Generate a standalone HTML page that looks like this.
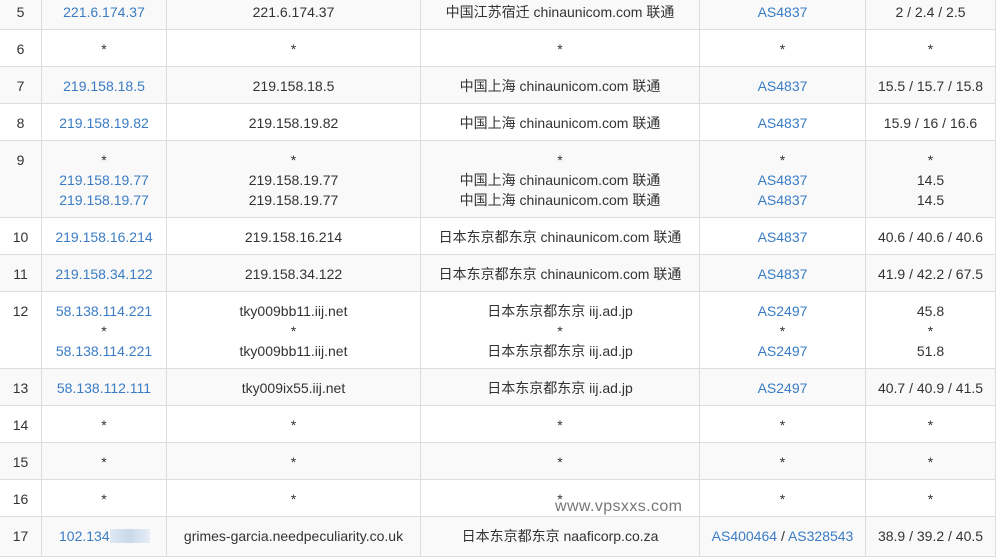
<!DOCTYPE html>
<html><head><meta charset="utf-8"><style>
body{margin:0;width:996px;height:551px;overflow:hidden;background:#fff;font-family:"Liberation Sans","Noto Sans CJK SC",sans-serif;font-size:14px;color:#333;position:relative}
.r{position:absolute;left:0;width:996px;border-bottom:1px solid #ddd;box-sizing:border-box}
.g{background:#f9f9f9}
.c{position:absolute;top:0;bottom:0;border-left:1px solid #ddd;text-align:center;padding-top:9px;line-height:20px;box-sizing:border-box}
.c0{left:0;width:41px;border-left:none}
.c1{left:41px;width:125px}.c2{left:166px;width:254px}.c3{left:420px;width:279px}.c4{left:699px;width:166px}.c5{left:865px;width:131px;border-right:1px solid #ddd}
.b{color:#3a7cc4}
</style></head><body>
<div class="r g" style="top:-7px;height:37px"><div class="c c0">5</div><div class="c c1 b">221.6.174.37</div><div class="c c2">221.6.174.37</div><div class="c c3">中国江苏宿迁 chinaunicom.com 联通</div><div class="c c4 b">AS4837</div><div class="c c5">2 / 2.4 / 2.5</div></div>
<div class="r" style="top:30px;height:37px"><div class="c c0">6</div><div class="c c1">*</div><div class="c c2">*</div><div class="c c3">*</div><div class="c c4">*</div><div class="c c5">*</div></div>
<div class="r g" style="top:67px;height:37px"><div class="c c0">7</div><div class="c c1 b">219.158.18.5</div><div class="c c2">219.158.18.5</div><div class="c c3">中国上海 chinaunicom.com 联通</div><div class="c c4 b">AS4837</div><div class="c c5">15.5 / 15.7 / 15.8</div></div>
<div class="r" style="top:104px;height:37px"><div class="c c0">8</div><div class="c c1 b">219.158.19.82</div><div class="c c2">219.158.19.82</div><div class="c c3">中国上海 chinaunicom.com 联通</div><div class="c c4 b">AS4837</div><div class="c c5">15.9 / 16 / 16.6</div></div>
<div class="r g" style="top:141px;height:77px"><div class="c c0">9</div><div class="c c1 b"><span style="color:#333">*</span><br>219.158.19.77<br>219.158.19.77</div><div class="c c2">*<br>219.158.19.77<br>219.158.19.77</div><div class="c c3">*<br>中国上海 chinaunicom.com 联通<br>中国上海 chinaunicom.com 联通</div><div class="c c4 b"><span style="color:#333">*</span><br>AS4837<br>AS4837</div><div class="c c5">*<br>14.5<br>14.5</div></div>
<div class="r" style="top:218px;height:37px"><div class="c c0">10</div><div class="c c1 b">219.158.16.214</div><div class="c c2">219.158.16.214</div><div class="c c3">日本东京都东京 chinaunicom.com 联通</div><div class="c c4 b">AS4837</div><div class="c c5">40.6 / 40.6 / 40.6</div></div>
<div class="r g" style="top:255px;height:37px"><div class="c c0">11</div><div class="c c1 b">219.158.34.122</div><div class="c c2">219.158.34.122</div><div class="c c3">日本东京都东京 chinaunicom.com 联通</div><div class="c c4 b">AS4837</div><div class="c c5">41.9 / 42.2 / 67.5</div></div>
<div class="r" style="top:292px;height:77px"><div class="c c0">12</div><div class="c c1 b">58.138.114.221<br><span style="color:#333">*</span><br>58.138.114.221</div><div class="c c2">tky009bb11.iij.net<br>*<br>tky009bb11.iij.net</div><div class="c c3">日本东京都东京 iij.ad.jp<br>*<br>日本东京都东京 iij.ad.jp</div><div class="c c4 b">AS2497<br><span style="color:#333">*</span><br>AS2497</div><div class="c c5">45.8<br>*<br>51.8</div></div>
<div class="r g" style="top:369px;height:37px"><div class="c c0">13</div><div class="c c1 b">58.138.112.111</div><div class="c c2">tky009ix55.iij.net</div><div class="c c3">日本东京都东京 iij.ad.jp</div><div class="c c4 b">AS2497</div><div class="c c5">40.7 / 40.9 / 41.5</div></div>
<div class="r" style="top:406px;height:37px"><div class="c c0">14</div><div class="c c1">*</div><div class="c c2">*</div><div class="c c3">*</div><div class="c c4">*</div><div class="c c5">*</div></div>
<div class="r g" style="top:443px;height:37px"><div class="c c0">15</div><div class="c c1">*</div><div class="c c2">*</div><div class="c c3">*</div><div class="c c4">*</div><div class="c c5">*</div></div>
<div class="r" style="top:480px;height:37px"><div class="c c0">16</div><div class="c c1">*</div><div class="c c2">*</div><div class="c c3">*</div><div class="c c4">*</div><div class="c c5">*</div></div>
<div class="r g" style="top:517px;height:40px"><div class="c c0">17</div><div class="c c1 b" style="text-align:left;padding-left:17px">102.134<span style="display:inline-block;width:40px;height:14px;vertical-align:-2px;background:linear-gradient(90deg,#dfe9f3,#c9d9ea,#e6eef6)"></span></div><div class="c c2">grimes-garcia.needpeculiarity.co.uk</div><div class="c c3">日本东京都东京 naaficorp.co.za</div><div class="c c4 b">AS400464 <span style="color:#333">/</span> AS328543</div><div class="c c5">38.9 / 39.2 / 40.5</div></div>
<div style="position:absolute;left:555px;top:498px;font-size:16px;color:#777;letter-spacing:0.4px">www.vpsxxs.com</div>
</body></html>
